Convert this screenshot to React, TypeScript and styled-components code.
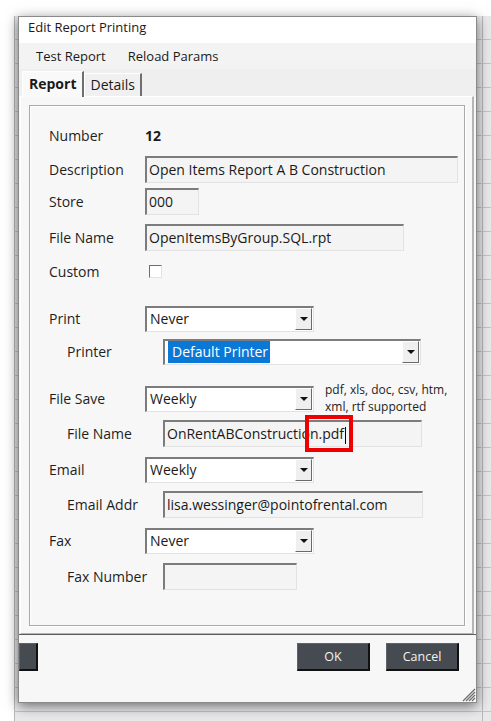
import React from 'react';
import styled, { createGlobalStyle } from 'styled-components';

const GlobalStyle = createGlobalStyle`
  html, body {
    margin: 0;
    padding: 0;
    background: #ffffff;
    font-family: 'Open Sans', 'Noto Sans', sans-serif;
    font-size: 13px;
    color: #1a1a1a;
  }
  * { box-sizing: border-box; }
`;

const Page = styled.div`
  width: 491px;
  height: 721px;
  overflow: hidden;
  padding: 16px 0 0 14px;
`;

const Backdrop = styled.div`
  height: 705px;
  padding-left: 4px;
  background-color: #e9e9ec;
  background-image:
    repeating-linear-gradient(to bottom, transparent 0 23px, #c4c4c8 23px 24px),
    repeating-linear-gradient(to right, #b8b8bc 0 1px, transparent 1px 468px);
`;

const Dialog = styled.div`
  width: 459px;
  height: 687px;
  display: flex;
  flex-direction: column;
  background: #f7f7f7;
  border: 1px solid #8a8a8a;
  box-shadow: 0 3px 12px rgba(0, 0, 0, 0.55);
  position: relative;
`;

const TitleBar = styled.div`
  height: 26px;
  background: #ffffff;
  padding: 1px 0 0 9px;
  font-size: 13px;
`;

const MenuBar = styled.div`
  height: 26px;
  background: #f3f3f3;
  display: flex;
  align-items: center;
  gap: 22px;
  padding-left: 17px;
  font-size: 13px;
`;

const TabStrip = styled.div`
  height: 27px;
  background: #efefef;
  display: flex;
  align-items: flex-end;
  padding-left: 3px;
`;

const Tab = styled.div<{ $active?: boolean }>`
  height: ${p => (p.$active ? '26px' : '23px')};
  padding: 0 ${p => (p.$active ? '6px' : '5px')} 2px;
  display: flex;
  align-items: center;
  font-size: 14px;
  font-weight: ${p => (p.$active ? 700 : 400)};
  background: ${p => (p.$active ? '#f9f9f9' : '#f0f0f0')};
  border-top: 1px solid #ffffff;
  border-left: 1px solid #ffffff;
  border-right: 2px solid #6f6f6f;
  margin-bottom: ${p => (p.$active ? '-1px' : '0')};
  position: relative;
  z-index: ${p => (p.$active ? 1 : 0)};
`;

const TabPage = styled.div`
  height: 538px;
  margin: 0 2px 0 1px;
  padding: 8px 7px 7px 8px;
  background: #f7f7f7;
  border-top: 1px solid #ffffff;
  border-left: 1px solid #ffffff;
  border-right: 2px solid #b5b5b5;
  border-bottom: 1px solid #b5b5b5;
`;

const GroupBox = styled.div`
  height: 100%;
  border: 1px solid #a9a9a9;
  box-shadow: inset 1px 1px 0 #ffffff, 1px 1px 0 #ffffff;
  padding: 16px 0 0 19px;
`;

const Row = styled.div<{ $top?: number; $indent?: boolean }>`
  display: flex;
  align-items: center;
  height: 27px;
  margin-top: ${p => p.$top ?? 0}px;
  padding-left: ${p => (p.$indent ? 18 : 0)}px;
`;

const Label = styled.div`
  width: 96px;
  flex-shrink: 0;
  font-size: 14px;
  color: #1e1e1e;
`;

const Value = styled.div`
  font-size: 14px;
  font-weight: 700;
`;

const TextBox = styled.div<{ $w: number }>`
  width: ${p => p.$w}px;
  height: 27px;
  background: #f4f4f4;
  border-top: 2px solid #7c7c7c;
  border-left: 2px solid #7c7c7c;
  border-right: 1px solid #e2e2e2;
  border-bottom: 1px solid #e2e2e2;
  padding-left: 2px;
  font-size: 14px;
  line-height: 23px;
  white-space: nowrap;
  position: relative;
`;

const Check = styled.div`
  width: 13px;
  height: 13px;
  margin-left: 4px;
  background: #ffffff;
  border-top: 1px solid #6e6e6e;
  border-left: 1px solid #6e6e6e;
  border-right: 1px solid #e3e3e3;
  border-bottom: 1px solid #e3e3e3;
`;

const Select = styled.div<{ $w: number }>`
  width: ${p => p.$w}px;
  height: 26px;
  display: flex;
  background: #ffffff;
  border-top: 2px solid #7c7c7c;
  border-left: 2px solid #7c7c7c;
  border-right: 1px solid #e2e2e2;
  border-bottom: 1px solid #e2e2e2;
  flex-shrink: 0;
`;

const SelectText = styled.div`
  flex: 1;
  padding-left: 3px;
  font-size: 14px;
  line-height: 22px;
  white-space: nowrap;
`;

const Highlight = styled.span`
  background: #0a78d6;
  color: #ffffff;
  padding: 1px 2px 2px 4px;
`;

const DropButton = styled.div`
  width: 17px;
  margin: 0 1px 1px 0;
  background: #efefef;
  border-top: 1px solid #ffffff;
  border-left: 1px solid #ffffff;
  border-right: 1px solid #6a6a6a;
  border-bottom: 1px solid #6a6a6a;
  display: flex;
  align-items: center;
  justify-content: center;

  &::after {
    content: '';
    border-left: 4px solid transparent;
    border-right: 4px solid transparent;
    border-top: 4px solid #111111;
  }
`;

const Note = styled.div`
  margin-left: 11px;
  align-self: flex-start;
  margin-top: -4px;
  font-size: 12px;
  line-height: 17px;
  color: #1e1e1e;
`;

const Caret = styled.span`
  display: inline-block;
  width: 1px;
  height: 17px;
  background: #000000;
  vertical-align: middle;
  margin-left: 1px;
`;

const Callout = styled.div`
  position: absolute;
  left: 140px;
  top: -7px;
  width: 48px;
  height: 37px;
  border: 4px solid #ee0000;
`;

const Footer = styled.div`
  flex: 1;
  border-top: 1px solid #5c5c5c;
  background: #f7f7f7;
  display: flex;
  align-items: flex-start;
  padding-top: 8px;
  position: relative;
`;

const DarkButton = styled.div<{ $w: number; $ml?: number }>`
  width: ${p => p.$w}px;
  height: 28px;
  margin-left: ${p => p.$ml ?? 0}px;
  background: #464a51;
  border-top: 1px solid #5e636b;
  border-left: 1px solid #5e636b;
  border-right: 2px solid #111111;
  border-bottom: 2px solid #111111;
  color: #f2f2f2;
  font-size: 12.5px;
  display: flex;
  align-items: center;
  justify-content: center;
`;

const Grip = styled.svg`
  position: absolute;
  right: 0;
  bottom: 0;
`;

const App = () => {
  return (
    <>
      <GlobalStyle />
      <Page>
        <Backdrop>
          <Dialog>
            <TitleBar>Edit Report Printing</TitleBar>
            <MenuBar>
              <span>Test Report</span>
              <span>Reload Params</span>
            </MenuBar>
            <TabStrip>
              <Tab $active>Report</Tab>
              <Tab>Details</Tab>
            </TabStrip>
            <TabPage>
              <GroupBox>
                <Row>
                  <Label>Number</Label>
                  <Value>12</Value>
                </Row>
                <Row $top={7}>
                  <Label>Description</Label>
                  <TextBox $w={313}>Open Items Report A B Construction</TextBox>
                </Row>
                <Row $top={5}>
                  <Label>Store</Label>
                  <TextBox $w={54}>000</TextBox>
                </Row>
                <Row $top={9}>
                  <Label>File Name</Label>
                  <TextBox $w={259}>OpenItemsByGroup.SQL.rpt</TextBox>
                </Row>
                <Row $top={7}>
                  <Label>Custom</Label>
                  <Check />
                </Row>
                <Row $top={20}>
                  <Label>Print</Label>
                  <Select $w={169}>
                    <SelectText>Never</SelectText>
                    <DropButton />
                  </Select>
                </Row>
                <Row $top={6} $indent>
                  <Label>Printer</Label>
                  <Select $w={258}>
                    <SelectText>
                      <Highlight>Default Printer</Highlight>
                    </SelectText>
                    <DropButton />
                  </Select>
                </Row>
                <Row $top={20}>
                  <Label>File Save</Label>
                  <Select $w={169}>
                    <SelectText>Weekly</SelectText>
                    <DropButton />
                  </Select>
                  <Note>
                    pdf, xls, doc, csv, htm,
                    <br />
                    xml, rtf supported
                  </Note>
                </Row>
                <Row $top={8} $indent>
                  <Label>File Name</Label>
                  <TextBox $w={259}>
                    OnRentABConstruction.pdf
                    <Caret />
                    <Callout />
                  </TextBox>
                </Row>
                <Row $top={9}>
                  <Label>Email</Label>
                  <Select $w={169}>
                    <SelectText>Weekly</SelectText>
                    <DropButton />
                  </Select>
                </Row>
                <Row $top={8} $indent>
                  <Label>Email Addr</Label>
                  <TextBox $w={260}>lisa.wessinger@pointofrental.com</TextBox>
                </Row>
                <Row $top={9}>
                  <Label>Fax</Label>
                  <Select $w={169}>
                    <SelectText>Never</SelectText>
                    <DropButton />
                  </Select>
                </Row>
                <Row $top={9} $indent>
                  <Label>Fax Number</Label>
                  <TextBox $w={134} />
                </Row>
              </GroupBox>
            </TabPage>
            <Footer>
              <DarkButton $w={19} />
              <DarkButton $w={73} $ml={259}>OK</DarkButton>
              <DarkButton $w={73} $ml={16}>Cancel</DarkButton>
              <Grip width="16" height="16" viewBox="0 0 16 16">
                <g stroke="#6d6d6d" strokeWidth="1.2">
                  <line x1="15" y1="3" x2="3" y2="15" />
                  <line x1="15" y1="6" x2="6" y2="15" />
                  <line x1="15" y1="9" x2="9" y2="15" />
                  <line x1="15" y1="12" x2="12" y2="15" />
                </g>
              </Grip>
            </Footer>
          </Dialog>
        </Backdrop>
      </Page>
    </>
  );
};

export default App;
